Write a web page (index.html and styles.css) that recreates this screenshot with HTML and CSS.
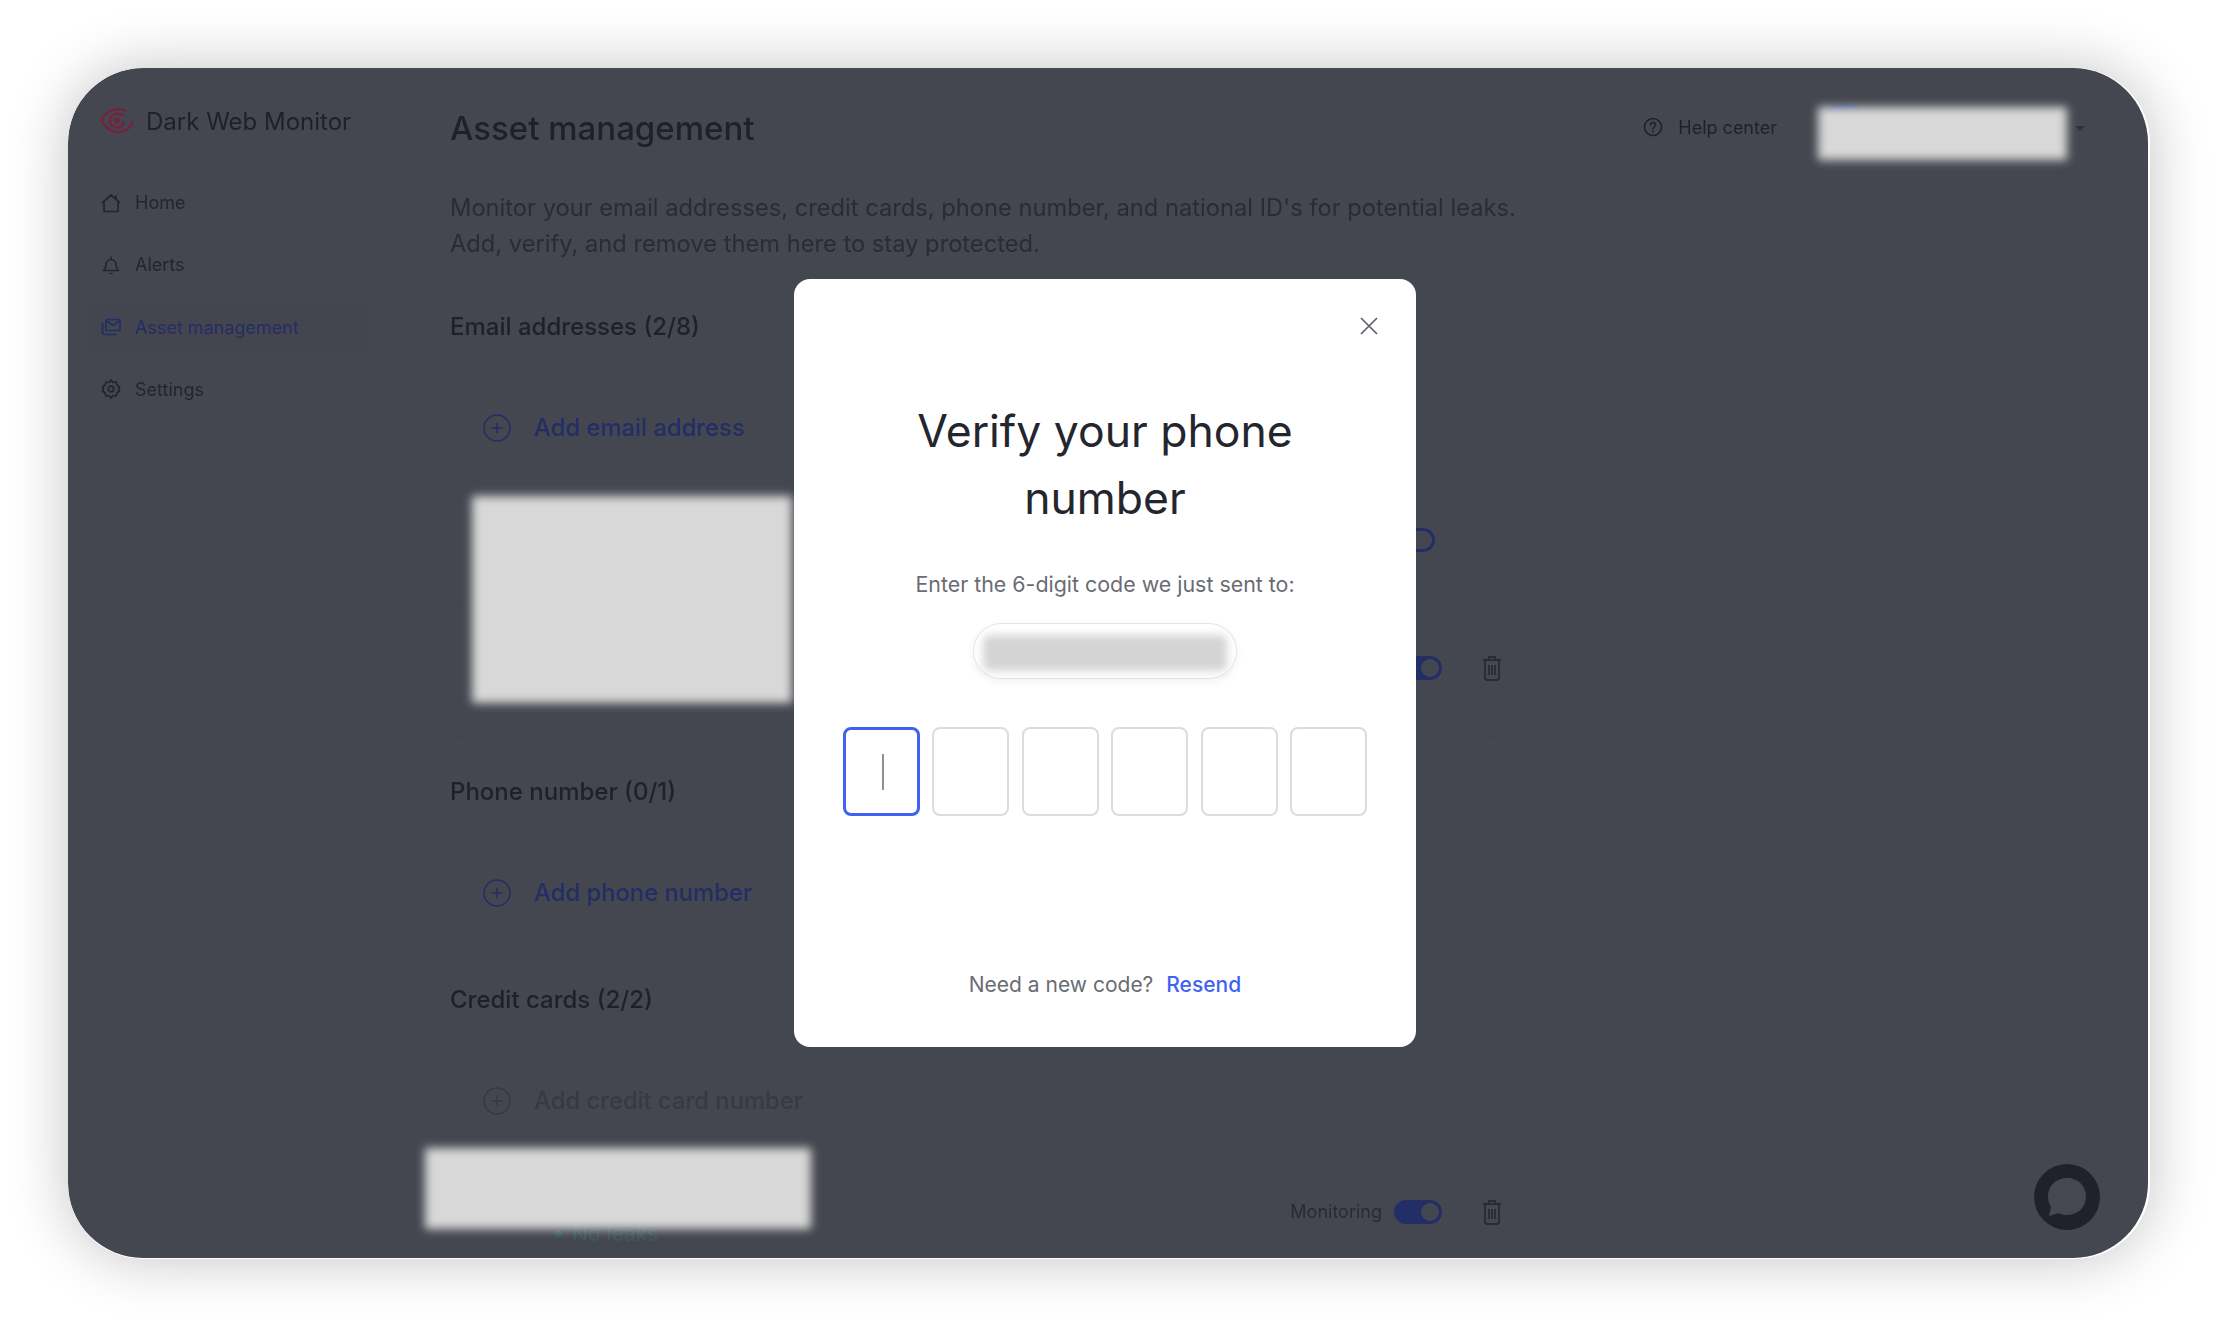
FILE: index.html
```html
<!DOCTYPE html>
<html lang="en">
<head>
    <meta charset="UTF-8">
    <title>Dark Web Monitor - Asset management</title>
    <link rel="stylesheet" href="styles.css">
</head>
<body>
    <div class="frame">
        <!-- Dimmed page behind the dialog -->
        <div class="page">
            <aside class="sidebar">
                <div class="brand">
                    <svg class="brand-logo" viewBox="0 0 34 28" fill="none" stroke="#7a1f3d" stroke-width="2.200" stroke-linecap="round">
                        <path d="M25 3.500C17 0 6 3 1.500 13c4 9 12 13 19 12 6-1 10-5 12-10"/>
                        <path d="M22.500 8C18 5 11 7 10 12.500c-.7 5 3 8 7 8 3.500 0 6-2.500 6.500-5.500"/>
                        <circle cx="17" cy="13.500" r="3" fill="#7a1f3d" stroke="none"/>
                    </svg>
                    <span>Dark Web Monitor</span>
                </div>
                <nav class="nav">
                    <a class="nav-item" href="#">
                        <svg viewBox="0 0 20 20" fill="none" stroke="currentColor" stroke-width="1.700" stroke-linejoin="round"><path d="M1 10 10 2l5 4.400V2M15 6.400 19 10M3 8.500V18.500h14V8.500"/></svg>
                        Home
                    </a>
                    <a class="nav-item" href="#">
                        <svg viewBox="0 0 20 20" fill="none" stroke="currentColor" stroke-width="1.700" stroke-linejoin="round"><path d="M2.500 15.500c1.500-1.500 2.500-3 2.500-5.500 0-3 2-5.500 5-5.500s5 2.500 5 5.500c0 2.500 1 4 2.500 5.500zM10 1.500v3M8.500 18.500h3"/></svg>
                        Alerts
                    </a>
                    <a class="nav-item active" href="#">
                        <svg viewBox="0 0 20 20" fill="none" stroke="currentColor" stroke-width="1.700" stroke-linejoin="round"><rect x="5" y="2.500" width="14" height="11" rx="1"/><path d="m5.500 3.500 6.500 5 6.500-5M1.500 5.500V16a1.500 1.500 0 0 0 1.500 1.500h13"/></svg>
                        Asset management
                    </a>
                    <a class="nav-item" href="#">
                        <svg viewBox="0 0 20 20" fill="none" stroke="currentColor" stroke-width="1.700" stroke-linejoin="round"><path d="m10 1 2 2.500 3-.5 1 3 2.500 2-1 2 1 2-2.500 2-1 3-3-.5-2 2.500-2-2.500-3 .5-1-3-2.500-2 1-2-1-2L4 6l1-3 3 .5z"/><circle cx="10" cy="10" r="2.800"/></svg>
                        Settings
                    </a>
                </nav>
            </aside>

            <main class="main">
                <header class="topbar">
                    <h1 class="page-title">Asset management</h1>
                    <a class="help" href="#">
                        <svg viewBox="0 0 20 20" fill="none" stroke="currentColor" stroke-width="1.600"><circle cx="10" cy="10" r="8.500"/><path d="M7.500 8c0-3.300 5-3.300 5 0 0 2-2.500 2-2.500 4" stroke-linecap="round"/><circle cx="10" cy="14.500" r=".9" fill="currentColor" stroke="none"/></svg>
                        Help center
                    </a>
                    <div class="user">
                        <span class="avatar"></span>
                        <span class="chevron"></span>
                    </div>
                </header>

                <p class="intro">Monitor your email addresses, credit cards, phone number, and national ID's for potential leaks.<br>Add, verify, and remove them here to stay protected.</p>

                <!-- Email addresses -->
                <section class="section first">
                    <h2 class="section-title">Email addresses (2/8)</h2>
                    <div class="add-row">
                        <svg class="plus" viewBox="0 0 28 28" fill="none" stroke="currentColor" stroke-width="1.500"><circle cx="14" cy="14" r="13"/><path d="M14 8.500v11M8.500 14h11"/></svg>
                        Add email address
                    </div>
                    <div class="asset-row primary">
                        <span class="toggle off"></span>
                    </div>
                    <div class="asset-row second">
                        <span class="toggle"></span>
                        <svg class="trash" viewBox="0 0 20 26" fill="none" stroke="currentColor" stroke-width="1.800"><path d="M1 5h18M7 5V2h6v3M3 5v18a2 2 0 0 0 2 2h10a2 2 0 0 0 2-2V5M7 10v10M10 10v10M13 10v10"/></svg>
                    </div>
                </section>

                <!-- Phone number -->
                <section class="section">
                    <h2 class="section-title">Phone number (0/1)</h2>
                    <div class="add-row tall">
                        <svg class="plus" viewBox="0 0 28 28" fill="none" stroke="currentColor" stroke-width="1.500"><circle cx="14" cy="14" r="13"/><path d="M14 8.500v11M8.500 14h11"/></svg>
                        Add phone number
                    </div>
                </section>

                <!-- Credit cards -->
                <section class="section">
                    <h2 class="section-title">Credit cards (2/2)</h2>
                    <div class="add-row disabled">
                        <svg class="plus" viewBox="0 0 28 28" fill="none" stroke="currentColor" stroke-width="1.500"><circle cx="14" cy="14" r="13"/><path d="M14 8.500v11M8.500 14h11"/></svg>
                        Add credit card number
                    </div>
                    <div class="asset-row last">
                        <span class="status">No leaks</span>
                        <span class="monitoring">Monitoring</span>
                        <span class="toggle"></span>
                        <svg class="trash" viewBox="0 0 20 26" fill="none" stroke="currentColor" stroke-width="1.800"><path d="M1 5h18M7 5V2h6v3M3 5v18a2 2 0 0 0 2 2h10a2 2 0 0 0 2-2V5M7 10v10M10 10v10M13 10v10"/></svg>
                    </div>
                </section>
            </main>

            <svg class="chat" viewBox="0 0 66 66">
                <circle cx="33" cy="33" r="33" fill="#1f222b"/>
                <path d="M33 14c11 0 19 8 19 18.500S44 51 33 51c-3 0-6-.6-8.500-1.800L15 52l2-9c-2-3-3-7-3-10.500C14 22 22 14 33 14z" fill="#454851"/>
            </svg>
        </div>

        <!-- Redacted areas, blurred in the capture -->
        <div class="redact redact-user"></div>
        <div class="redact redact-emails"></div>
        <div class="redact redact-card"></div>

        <div class="modal-wrap">
            <div class="modal">
                <svg class="close" viewBox="0 0 20 20" fill="none" stroke="#5f6169" stroke-width="1.700"><path d="m2 2 16 16M18 2 2 18"/></svg>
                <h2 class="modal-title">Verify your phone number</h2>
                <p class="modal-text">Enter the 6-digit code we just sent to:</p>
                <div class="phone-pill"><span class="phone-blur"></span></div>
                <div class="code-inputs">
                    <div class="code-box focus"><span class="caret"></span></div>
                    <div class="code-box"></div>
                    <div class="code-box"></div>
                    <div class="code-box"></div>
                    <div class="code-box"></div>
                    <div class="code-box"></div>
                </div>
                <p class="resend">Need a new code? <a href="#">Resend</a></p>
            </div>
        </div>
    </div>
</body>
</html>
```

FILE: styles.css
```css
* {
    margin: 0;
    padding: 0;
    box-sizing: border-box;
}

body {
    font-family: Inter, "Liberation Sans", sans-serif;
    background-color: #fff;
    height: 1328px;
    padding: 68px 70px 69px 68px;
    overflow: hidden;
}

a {
    color: inherit;
    text-decoration: none;
}

.frame {
    position: relative;
    height: 1191px;
    background-color: #fff;
    border-radius: 75px;
    box-shadow: 0 0 60px rgba(0, 0, 0, 0.24);
    overflow: hidden;
}

.page {
    position: relative;
    display: flex;
    height: 1190px;
    margin-right: 2px;
    background-color: #44474f;
    border-radius: 75px;
    color: #1f2129;
    overflow: hidden;
    filter: blur(0.5px);
}

/* Sidebar */
.sidebar {
    width: 382px;
    flex-shrink: 0;
    padding: 36px 10px 0 15px;
}

.brand {
    display: flex;
    align-items: center;
    gap: 12px;
    height: 34px;
    padding-left: 17px;
    font-size: 24px;
}

.brand-logo {
    width: 34px;
    height: 28px;
}

.nav {
    margin-top: 37px;
    display: flex;
    flex-direction: column;
    gap: 7.300px;
    width: 289px;
}

.nav-item {
    display: flex;
    align-items: center;
    gap: 14px;
    height: 55px;
    padding-left: 18px;
    font-size: 18px;
    border-radius: 8px;
    color: #23252e;
}

.nav-item svg {
    width: 20px;
    height: 20px;
}

.nav-item.active {
    background-color: #43464e;
    color: #232d66;
}

/* Main column */
.main {
    flex: 1;
    padding: 36px 63px 0 0;
}

.topbar {
    display: flex;
    align-items: center;
    height: 48px;
}

.page-title {
    font-size: 33px;
    font-weight: 500;
    flex: 1;
}

.help {
    display: flex;
    align-items: center;
    gap: 15px;
    margin-top: -2px;
    font-size: 18px;
}

.help svg {
    width: 20px;
    height: 20px;
}

.user {
    display: flex;
    align-items: center;
    justify-content: space-between;
    width: 266px;
    margin-left: 42px;
}

.avatar {
    width: 50px;
    height: 50px;
    border-radius: 50%;
    background-color: #2f3f6e;
}

.chevron {
    width: 0;
    height: 0;
    border: 5px solid transparent;
    border-top-color: #2f323b;
    border-bottom: 0;
}

.intro {
    margin-top: 38px;
    font-size: 23.7px;
    line-height: 36px;
    color: #2a2c35;
    white-space: nowrap;
}

.section {
    width: 1055px;
    margin-top: 37px;
}

.section.first {
    margin-top: 49px;
}

.section-title {
    font-size: 24px;
    font-weight: 500;
    line-height: 32px;
    margin-bottom: 39px;
}

.add-row {
    display: flex;
    align-items: center;
    gap: 23px;
    height: 93px;
    padding: 0 0 1px 33px;
    border-bottom: 1px solid #41444c;
    font-size: 23.8px;
    font-weight: 500;
    color: #232d66;
}

.add-row.tall {
    height: 100px;
    padding-bottom: 8px;
}

.add-row.disabled {
    color: #373a43;
}

.plus {
    width: 28px;
    height: 28px;
}

/* Rows of monitored assets */
.asset-row {
    display: flex;
    align-items: center;
    justify-content: flex-end;
    gap: 40px;
    padding-right: 3px;
    border-bottom: 1px solid #41444c;
}

.asset-row.primary {
    height: 129px;
    padding: 2px 70px 0 0;
}

.asset-row.second {
    height: 135px;
    padding-bottom: 6px;
    border-radius: 0 0 16px 16px;
}

.asset-row.last {
    height: 128px;
    border-bottom: 0;
}

.toggle {
    position: relative;
    width: 48px;
    height: 24px;
    border-radius: 12px;
    background-color: #232d66;
}

.toggle::after {
    content: "";
    position: absolute;
    top: 3px;
    right: 3px;
    width: 18px;
    height: 18px;
    border-radius: 50%;
    background-color: #44474f;
}

.toggle.off {
    background-color: #44474f;
    border: 3px solid #232d66;
}

.toggle.off::after {
    top: 0;
    right: 0;
}

.trash {
    width: 20px;
    height: 26px;
    color: #292b34;
}

.monitoring {
    margin-top: -2px;
    margin-right: -28px;
    font-size: 18px;
    color: #292b34;
}

.status {
    display: flex;
    align-items: center;
    gap: 10px;
    margin: 42px auto 0 105px;
    font-size: 21px;
    color: #3d5a57;
}

.status::before {
    content: "";
    width: 7px;
    height: 7px;
    border-radius: 50%;
    background-color: #3d5a57;
}

.chat {
    position: absolute;
    right: 48px;
    bottom: 28px;
    width: 66px;
    height: 66px;
}

/* Blurred-out personal data */
.redact {
    position: absolute;
    background-color: #d8d8d8;
    filter: blur(5px);
}

.redact-user {
    left: 1750px;
    top: 39px;
    width: 249px;
    height: 53px;
}

.redact-emails {
    left: 404px;
    top: 428px;
    width: 320px;
    height: 207px;
}

.redact-card {
    left: 357px;
    top: 1080px;
    width: 386px;
    height: 81px;
}

/* Dialog */
.modal-wrap {
    position: absolute;
    inset: 0 8px 1px 0;
    display: flex;
    align-items: center;
    justify-content: center;
}

.modal {
    display: flex;
    flex-direction: column;
    align-items: center;
    width: 622px;
    height: 768px;
    padding-top: 36px;
    background-color: #fff;
    border-radius: 16px;
}

.close {
    align-self: flex-end;
    width: 20px;
    height: 20px;
    margin: 1px 37px 1px 0;
}

.modal-title {
    width: 440px;
    margin-top: 61px;
    font-size: 44.5px;
    font-weight: 430;
    line-height: 67px;
    text-align: center;
    color: #24262e;
}

.modal-text {
    margin-top: 36px;
    font-size: 21.4px;
    line-height: 32px;
    color: #6a6c74;
}

.phone-pill {
    display: flex;
    align-items: center;
    justify-content: center;
    width: 264px;
    height: 56px;
    margin-top: 23px;
    border: 1px solid #e4e4e4;
    border-radius: 28px;
    box-shadow: 0 3px 8px rgba(0, 0, 0, 0.05);
}

.phone-blur {
    width: 244px;
    height: 36px;
    margin-top: 4px;
    border-radius: 6px;
    background-color: #d4d4d4;
    filter: blur(4px);
}

.code-inputs {
    display: flex;
    gap: 12.400px;
    margin-top: 48px;
}

.code-box {
    display: flex;
    align-items: center;
    justify-content: center;
    width: 77px;
    height: 89px;
    border: 2px solid #dcdcdc;
    border-radius: 8px;
}

.code-box.focus {
    border: 3px solid #3f62f0;
}

.caret {
    width: 2px;
    height: 36px;
    margin-left: 2px;
    background-color: #8e8e93;
}

.resend {
    margin-top: 153px;
    font-size: 21px;
    line-height: 32px;
    color: #6a6c74;
}

.resend a {
    margin-left: 7px;
    color: #3f62f0;
    font-weight: 500;
}
```
